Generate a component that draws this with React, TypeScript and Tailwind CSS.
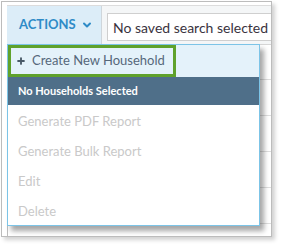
import { ChevronDown, Plus } from "lucide-react";

export default function App() {
  const items = ["Generate PDF Report", "Generate Bulk Report", "Edit", "Delete"];
  const rows = [0, 1, 2, 3, 4];

  return (
    <div className="w-[281px] h-[245px] bg-white pl-[1px] pt-[1px]" style={{ fontFamily: "Lato, 'Open Sans', sans-serif" }}>
      <div className="relative w-[271px] h-[236px] border border-[#bcbcbc] bg-white overflow-hidden shadow-[3px_3px_4px_rgba(0,0,0,0.18)] pl-[5px] pt-[3px]">
        {/* top bar */}
        <div className="flex h-[39px] border-t border-[#dcdcdc] bg-[#f4f6f7]">
          <div className="w-[95px] shrink-0 flex items-center gap-[5px] pl-[12px] bg-[#dcedf8] border-r border-[#cfd6db]">
            <span className="text-[13px] font-bold text-[#2e8bc7]">ACTIONS</span>
            <ChevronDown className="w-[12px] h-[12px] text-[#2e8bc7]" strokeWidth={4} />
          </div>
          <div className="flex-1 pl-[5px] pt-[7px]">
            <div className="h-[28px] w-[200px] bg-white border border-[#cfcfcf] pl-[5px] flex items-center text-[14px] text-[#3a3340] whitespace-nowrap">
              No saved search selected
            </div>
          </div>
        </div>
        {/* table behind the menu */}
        <div className="border-t border-[#d6d6d6] border-l border-l-[#bdbdbd] h-full">
          <div className="h-[35px] border-b border-[#dedede]" />
          {rows.map((r) => (
            <div key={r} className="h-[36px] border-b border-[#dedede]" />
          ))}
        </div>

        {/* dropdown menu */}
        <div className="absolute left-[5px] top-[42px] w-[253px] bg-white border border-[#7cc4e7] shadow-[4px_5px_5px_rgba(0,0,0,0.35)]">
          <div className="h-[32px] bg-[#e4f2fa]">
            <div className="w-[168px] h-[32px] border-[3px] border-[#5fa22c] flex items-center pl-[5px] text-[13px] text-[#56687a] whitespace-nowrap">
              <Plus className="w-[10px] h-[10px] mr-[6px] text-[#4a5a68]" strokeWidth={4.5} />
              Create New Household
            </div>
          </div>
          <div className="h-[28px] bg-[#4f6f89] flex items-center pl-[10px] text-[11px] font-bold text-white">
            No Households Selected
          </div>
          <div>
            {items.map((item) => (
              <div key={item} className="h-[30px] pt-[3px] flex items-center pl-[10px] text-[13px] text-[#c9c9c9]">
                {item}
              </div>
            ))}
          </div>
        </div>
      </div>
    </div>
  );
}
